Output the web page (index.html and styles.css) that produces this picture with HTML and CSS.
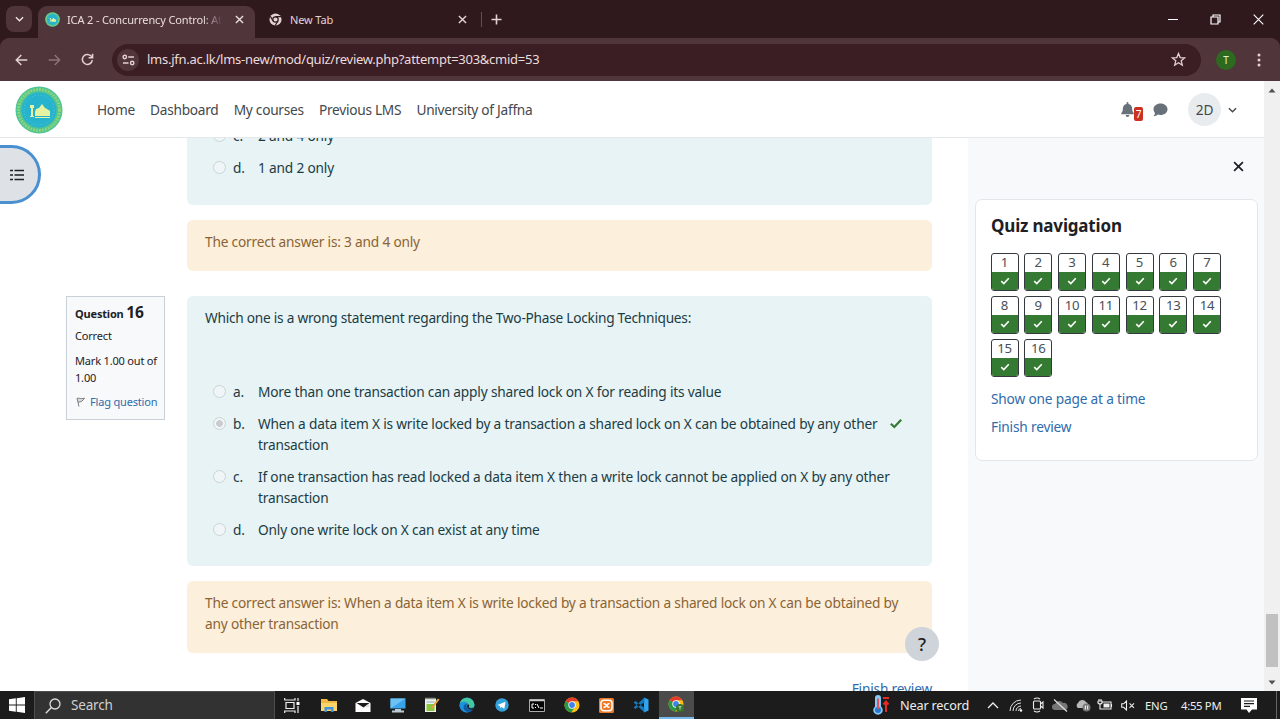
FILE: index.html
```html
<!DOCTYPE html>
<html lang="en">
<head>
<meta charset="utf-8">
<title>ICA 2 - Concurrency Control</title>
<link rel="stylesheet" href="styles.css">
</head>
<body>
<svg class="defs" width="0" height="0">
  <symbol id="check" viewBox="0 0 12 10"><path d="M1.3 5.2 4.5 8.2 10.7 1.6" fill="none" stroke="currentColor" stroke-width="2"/></symbol>
  <symbol id="close" viewBox="0 0 10 10"><path d="M1 1 9 9M9 1 1 9" fill="none" stroke="currentColor" stroke-width="1.6"/></symbol>
  <symbol id="down" viewBox="0 0 10 6"><path d="M1 1 5 5 9 1" fill="none" stroke="currentColor" stroke-width="1.5"/></symbol>
  <symbol id="logo" viewBox="0 0 48 48">
    <circle cx="24" cy="24" r="23.5" fill="#4fc494"/><circle cx="24" cy="24" r="20.5" fill="none" stroke="#8ad47a" stroke-width="3" stroke-dasharray="2 1"/>
    <circle cx="24" cy="24" r="17.5" fill="#27b3cd"/><circle cx="24" cy="24" r="15" fill="none" stroke="#55cbd0" stroke-width="1" stroke-dasharray="1 2"/>
    <path d="M20 30h15v-5l-3-2-2-1-3-4-3 4-3 1-1 3zM15 31h4v-1h-1v-8h1v-3h-4v3h1v8h-1v1zM20 31h15v1H20z" fill="#e6f3a0"/>
  </symbol>
  <symbol id="chrome" viewBox="0 0 16 16">
    <circle cx="8" cy="8" r="7.5" fill="#fbc116"/><path d="M8 8 1.5 4.25A7.5 7.5 0 0 1 14.5 4.3H8z" fill="#e33b2e"/><path d="M1.5 4.25A7.5 7.5 0 0 0 7.3 15.5L11 9.6 8 8z" fill="#279847"/>
    <circle cx="8" cy="8" r="3.7" fill="#fff"/><circle cx="8" cy="8" r="2.9" fill="#3f82ee"/>
  </symbol>
</svg>
<header class="browser">
  <div class="tabs">
    <button class="tab-menu"><svg width="9" height="6"><use href="#down"/></svg></button>
    <div class="tab tab-active">
      <svg width="15" height="15"><use href="#logo"/></svg>
      <span class="tab-title">ICA 2 - Concurrency Control: Attempt</span>
      <svg class="tab-x" width="9" height="9"><use href="#close"/></svg>
    </div>
    <div class="tab tab-idle">
      <svg width="13" height="13" viewBox="0 0 14 14"><circle cx="7" cy="7" r="6.5" fill="#e3d2d4"/><circle cx="7" cy="7" r="2.9" fill="#e3d2d4" stroke="#30191d" stroke-width="1.3"/><path d="M7 3.9h6M4.3 8.4 1.4 3.6M9.7 8.6 6.6 13.5" stroke="#30191d" stroke-width="1.3"/></svg>
      <span class="tab-name">New Tab</span>
      <svg class="tab-x" width="9" height="9"><use href="#close"/></svg>
    </div>
    <span class="tab-sep"></span>
    <svg class="plus" width="11" height="11" viewBox="0 0 11 11"><path d="M5.5.5v10M.5 5.5h10" stroke="#e3d2d4" stroke-width="1.6"/></svg>
    <div class="window-buttons">
      <svg width="10" height="11" viewBox="0 0 10 11"><path d="M0 5.5h10" stroke="#fff"/></svg>
      <svg width="11" height="11" viewBox="0 0 11 11"><path d="M1 3h7v7H1zM3 3V1h7v7H8" fill="none" stroke="#fff" stroke-width="1.2"/></svg>
      <svg width="11" height="11" viewBox="0 0 11 11"><path d="M.7.7l9.6 9.6M10.3.7.7 10.3" stroke="#fff" stroke-width="1.1"/></svg>
    </div>
  </div>
  <div class="toolbar">
    <svg class="tool" width="13" height="12" viewBox="0 0 13 12"><path d="M12.3 6H1.5M6.3 1 1.3 6l5 5" fill="none" stroke="#e3d2d4" stroke-width="1.5"/></svg>
    <svg class="tool" width="13" height="12" viewBox="0 0 13 12"><path d="M.7 6h10.8M6.7 1l5 5-5 5" fill="none" stroke="#8d7377" stroke-width="1.4"/></svg>
    <svg class="tool" width="13" height="13" viewBox="0 0 13 13"><path d="M11.3 7.2A5 5 0 1 1 9.8 2.8L11.3 4.3M11.6.8v4H7.6" fill="none" stroke="#e3d2d4" stroke-width="1.5"/></svg>
    <div class="address">
      <span class="site-info"><svg width="13" height="12" viewBox="0 0 13 12"><g fill="none" stroke="#e3d2d4" stroke-width="1.4"><path d="M6.2 3H12M1 9h5.5"/><circle cx="2.8" cy="3" r="1.7"/><circle cx="10.2" cy="9" r="1.7"/></g></svg></span>
      <span class="url">lms.jfn.ac.lk/lms-new/mod/quiz/review.php?attempt=303&amp;cmid=53</span>
      <svg class="star" width="15" height="15" viewBox="0 0 15 15"><path d="M7.5 1.5 9.2 5.6l4.4.3-3.4 2.9 1.1 4.4-3.8-2.4-3.8 2.4 1.1-4.4L1.4 5.9l4.4-.3z" fill="none" stroke="#e3d2d4" stroke-width="1.3"/></svg>
    </div>
    <span class="profile">T</span>
    <svg class="dots" width="4" height="14" viewBox="0 0 4 14"><g fill="#e3d2d4"><circle cx="2" cy="2" r="1.5"/><circle cx="2" cy="7" r="1.5"/><circle cx="2" cy="12" r="1.5"/></g></svg>
  </div>
</header>
<div class="viewport">
  <div class="page">
    <nav class="navbar">
      <svg class="logo" width="48" height="48"><use href="#logo"/></svg>
      <a>Home</a><a>Dashboard</a><a>My courses</a><a>Previous LMS</a><a>University of Jaffna</a>
      <div class="bell"><svg width="13" height="15" viewBox="0 0 14 16"><path d="M7 0a1 1 0 0 1 1 1v1c2.500.5 4 2.300 4 5 0 3 .8 3.800 1.700 5v1H.3v-1C1.200 10.800 2 10 2 7c0-2.700 1.500-4.500 4-5V1a1 1 0 0 1 1-1zM5 14h4a2 2 0 0 1-4 0z" fill="#68717a"/></svg><span class="count">7</span></div>
      <svg class="chat" width="15" height="14" viewBox="0 0 15 14"><path d="M7.500.5c4 0 7 2.500 7 5.800s-3 5.800-7 5.800c-1 0-2-.2-2.800-.5-1 .9-2.400 1.600-4.200 1.600.8-.9 1.400-2 1.500-3A5.300 5.300 0 0 1 .5 6.300C.5 3 3.500.5 7.500.5z" fill="#68717a"/></svg>
      <span class="user">2D</span>
      <svg class="user-down" width="9" height="6"><use href="#down"/></svg>
    </nav>
    <div class="columns">
      <button class="index-toggle"><svg width="14" height="12" viewBox="0 0 14 12"><path d="M0 1.500h3M0 6h3M0 10.500h3M4.500 1.500H14M4.500 6H14M4.500 10.500H14" stroke="#1d2125" stroke-width="1.700"/></svg></button>
      <main class="content">
        <section class="question question-first">
          <div class="info-space"></div>
          <div class="body">
            <div class="formulation partial">
              <div class="answer"><i class="radio"></i><b>c.</b><p>2 and 4 only</p></div>
              <div class="answer"><i class="radio"></i><b>d.</b><p>1 and 2 only</p></div>
            </div>
            <div class="outcome">The correct answer is: 3 and 4 only</div>
          </div>
        </section>
        <section class="question">
          <aside class="info">
            <h3>Question <strong>16</strong></h3>
            <p class="state">Correct</p>
            <p class="grade">Mark 1.00 out of<br>1.00</p>
            <p class="flag"><svg width="9" height="10" viewBox="0 0 9 10"><path d="M1 1.200 3 9.500M1 1.500c2-1 3 .8 7.500-.3C7 3.500 5 5.500 2.200 5" fill="#d8dadc" stroke="#777c81" stroke-width="1"/></svg><a>Flag question</a></p>
          </aside>
          <div class="body">
            <div class="formulation">
              <p class="qtext">Which one is a wrong statement regarding the Two-Phase Locking Techniques:</p>
              <div class="answer"><i class="radio"></i><b>a.</b><p>More than one transaction can apply shared lock on X for reading its value</p></div>
              <div class="answer"><i class="radio radio-on"></i><b>b.</b><p>When a data item X is write locked by a transaction a shared lock on X can be obtained by any other<br>transaction</p><svg class="correct" width="14" height="11"><use href="#check"/></svg></div>
              <div class="answer"><i class="radio"></i><b>c.</b><p>If one transaction has read locked a data item X then a write lock cannot be applied on X by any other<br>transaction</p></div>
              <div class="answer"><i class="radio"></i><b>d.</b><p>Only one write lock on X can exist at any time</p></div>
            </div>
            <div class="outcome">The correct answer is: When a data item X is write locked by a transaction a shared lock on X can be obtained by<br>any other transaction</div>
          </div>
        </section>
        <a class="finish">Finish review</a>
        <button class="help">?</button>
      </main>
      <aside class="drawer">
        <svg class="drawer-close" width="11" height="11"><use href="#close"/></svg>
        <section class="card">
          <h2>Quiz navigation</h2>
          <div class="quiz-grid">
            <a class="q">1<span><svg width="10" height="8"><use href="#check"/></svg></span></a><a class="q">2<span><svg width="10" height="8"><use href="#check"/></svg></span></a><a class="q">3<span><svg width="10" height="8"><use href="#check"/></svg></span></a><a class="q">4<span><svg width="10" height="8"><use href="#check"/></svg></span></a><a class="q">5<span><svg width="10" height="8"><use href="#check"/></svg></span></a><a class="q">6<span><svg width="10" height="8"><use href="#check"/></svg></span></a><a class="q">7<span><svg width="10" height="8"><use href="#check"/></svg></span></a>
            <a class="q">8<span><svg width="10" height="8"><use href="#check"/></svg></span></a><a class="q">9<span><svg width="10" height="8"><use href="#check"/></svg></span></a><a class="q">10<span><svg width="10" height="8"><use href="#check"/></svg></span></a><a class="q">11<span><svg width="10" height="8"><use href="#check"/></svg></span></a><a class="q">12<span><svg width="10" height="8"><use href="#check"/></svg></span></a><a class="q">13<span><svg width="10" height="8"><use href="#check"/></svg></span></a><a class="q">14<span><svg width="10" height="8"><use href="#check"/></svg></span></a>
            <a class="q">15<span><svg width="10" height="8"><use href="#check"/></svg></span></a><a class="q">16<span><svg width="10" height="8"><use href="#check"/></svg></span></a>
          </div>
          <a class="card-link">Show one page at a time</a>
          <a class="card-link">Finish review</a>
        </section>
      </aside>
    </div>
  </div>
  <div class="scrollbar">
    <svg width="8" height="5" viewBox="0 0 8 5"><path d="M4 .5 7.500 4.500h-7z" fill="#505050"/></svg>
    <span class="thumb"></span>
    <svg width="8" height="5" viewBox="0 0 8 5"><path d="M4 4.500 7.500.5h-7z" fill="#505050"/></svg>
  </div>
</div>
<footer class="taskbar">
  <span class="start"><svg width="16" height="16" viewBox="0 0 16 16"><path d="M0 2.300 6.800 1.300v6.200H0zM7.700 1.200 16 0v7.500H7.700zM0 8.400h6.800v6.300L0 13.700zM7.700 8.400H16V16l-8.300-1.200z" fill="#fff"/></svg></span>
  <div class="search"><svg width="16" height="16" viewBox="0 0 16 16"><circle cx="10" cy="6" r="5" fill="none" stroke="#dcdcdc" stroke-width="1.300"/><path d="M6.400 9.600.8 15.200" stroke="#dcdcdc" stroke-width="1.400"/></svg><span>Search</span></div>
  <div class="apps">
    <span><svg width="16" height="15" viewBox="0 0 16 15"><path d="M2 4.500h8v6H2zM.7 0v2H11V0M.7 15v-2H11v2M14 0v3M14 8v7" fill="none" stroke="#eee" stroke-width="1.200"/><path d="M12.500 4h3v3h-3z" fill="#fff"/></svg></span>
    <span class="app-folder"><svg width="16" height="14" viewBox="0 0 16 14"><path d="M0 1h6l1.500 2H16v10H0z" fill="#f3b83f"/><path d="M0 5h16v8H0z" fill="#fbd56b"/><path d="M3.500 14V9h9v5h-2.300v-2.500H5.800V14z" fill="#3f93dc"/></svg></span>
    <span class="app-mail"><svg width="16" height="13" viewBox="0 0 16 13"><path d="M.5 4 8 0l7.500 4v9H.5z" fill="#fff"/><path d="M1.500 4h13L8.500 8.500z" fill="#1c1c1c"/><path d="M8.500 8.500 14 5v3z" fill="#ddd"/></svg></span>
    <span class="app-mail"><svg width="16" height="15" viewBox="0 0 16 15"><path d="M.5.500h15v10H.5z" fill="#3aa4e8"/><path d="M.5 10.500 15.500.500H.5z" fill="#6cc2f2"/><path d="M5 11h6v1.500h3v2H2v-2h3z" fill="#b9cbd6"/></svg></span>
    <span><svg width="16" height="16" viewBox="0 0 16 16"><path d="M1 1.500h11V15H1z" fill="#eef2e7"/><path d="M1.500 1.500h10" stroke="#8a9382" stroke-width="2" stroke-dasharray="1 1"/><path d="M2.500 7h8v7h-8z" fill="#8bc53f"/><path d="M2.500 5h8" stroke="#78b2cf"/><path d="M14.700 2 8 11" stroke="#e9a13b" stroke-width="2"/></svg></span>
    <span><svg width="16" height="16" viewBox="0 0 16 16"><circle cx="8" cy="8" r="7.500" fill="#167fc9"/><path d="M.6 7A7.500 7.500 0 0 1 15.500 8c0 3-5 3.500-6.500 2 1.500-2-.5-5-3.500-5-2.500 0-4.300 1.200-4.900 2z" fill="#42c9a0"/><path d="M.5 8c.5-4 6.500-4 8-1.500-4 0-4.500 5.500 0 8.900C3 15.500.5 11.500.5 8z" fill="#1d92dd"/><path d="M8.500 6.800C5 9 8 14 14 12.300c-2 3.500-7 3.500-9 0-1.200-2.800.5-5.700 3.500-5.500z" fill="#14599e"/><path d="M9 7.500c2 0 1 2.500.5 3 2 1.500 5 1 6.500 0v1.500c-3 1.500-8 .5-8-2.500 0-1 .5-1.500 1-2z" fill="#1c1c1c"/></svg></span>
    <span><svg width="14" height="14" viewBox="0 0 14 14"><circle cx="7" cy="7" r="6.700" fill="#31a3dc"/><path d="m2.500 7 8-3.300L9.300 11 6.600 9 5.300 10.200 5 8z" fill="#fff"/></svg></span>
    <span><svg width="16" height="13" viewBox="0 0 16 13"><path d="M.5.500h15v12H.5z" fill="#050505" stroke="#aaa"/><path d="M1 1.500h14" stroke="#ccc" stroke-width="1.500"/><path d="M5 5H3v4h2M6.500 5v1M6.500 8v1M8 5l2 4M11 9h3" fill="none" stroke="#fff" stroke-width="1"/></svg></span>
    <span><svg width="16" height="16"><use href="#chrome"/></svg></span>
    <span><svg width="15" height="15" viewBox="0 0 15 15"><rect width="15" height="15" rx="1.500" fill="#ec7a2b"/><g fill="none" stroke="#fff" stroke-width="1.500"><rect x="2" y="2.300" width="11" height="10.400" rx="3"/><path d="M4.500 5.500c3 0 3 4 6 4M10.500 5.500c-3 0-3 4-6 4"/></g></svg></span>
    <span><svg width="16" height="16" viewBox="0 0 16 16"><path d="M11 .5 15.500 2.500v11L11 15.500z" fill="#31a5ee"/><path d="M11.500.5v4.500L2.500 12 .7 10.500zM11.500 15.500V11L2.500 4 .7 5.500z" fill="#167abf"/></svg></span>
    <span class="app-active"><svg width="16" height="16" viewBox="0 0 16 16"><use href="#chrome"/><circle cx="12" cy="12" r="4" fill="#36752b"/><path d="M10.500 10.700h3M12 10.700v3" stroke="#d8edd3" stroke-width=".8"/></svg></span>
  </div>
  <div class="weather"><svg width="18" height="20" viewBox="0 0 18 20"><path d="M3 3a3 3 0 0 1 6 0v8.500a4.700 4.700 0 1 1-6 0z" fill="#8ac9f5"/><circle cx="6" cy="15" r="3" fill="#2877c9"/><path d="M6 3.500V14" stroke="#e05260" stroke-width="2"/><path d="M11 3h6M14 17V7M11.500 9.500 14 6.500l2.500 3" fill="none" stroke="#e52a25" stroke-width="2"/></svg><span>Near record</span></div>
  <div class="tray">
    <span><svg width="12" height="7" viewBox="0 0 12 7"><path d="M1 6 6 1l5 5" fill="none" stroke="#eee" stroke-width="1.300"/></svg></span>
    <span><svg width="14" height="13" viewBox="0 0 14 13"><g fill="none" stroke="#ddd"><path d="M1 12A11 11 0 0 1 12 1M4 12a8 8 0 0 1 8-8M7 12a5 5 0 0 1 5-5M9.500 12A2.500 2.500 0 0 1 12 9.500"/></g><circle cx="12" cy="11.500" r="1.200" fill="#fff"/></svg></span>
    <span><svg width="12" height="16" viewBox="0 0 12 16"><g fill="none" stroke="#eee" stroke-width="1.100"><rect x="1.500" y="4" width="7" height="8" rx="1"/><path d="M8.500 7 11 5v6L8.500 9M2 2q3-2 6 0M2 14q3 2 6 0"/></g></svg></span>
    <span><svg width="16" height="13" viewBox="0 0 16 13"><path d="M3 11a3 3 0 0 1 0-6 4.500 4.500 0 0 1 8-1 3.600 3.600 0 0 1 2 7z" fill="#777"/><path d="M2 .5 15 12.500" stroke="#ddd" stroke-width="1.300"/></svg></span>
    <span><svg width="16" height="13" viewBox="0 0 16 13"><path d="M3 9a3 3 0 0 1 0-5A4.500 4.500 0 0 1 11 3a3.600 3.600 0 0 1 1 6z" fill="#b9b9b9"/><circle cx="11.500" cy="8.500" r="4" fill="#777"/><path d="M10.300 6.500v4M12.700 6.500v4" stroke="#fff"/></svg></span>
    <span><svg width="16" height="12" viewBox="0 0 16 12"><path d="M5 3h9v7H5M14.500 5v3M1 2v2q2 2 4 0V2H1M2 0v2M4 0v2M3 5v5h3" fill="none" stroke="#eee" stroke-width="1.100"/><path d="M6.500 4.500h6v4h-6z" fill="#eee"/></svg></span>
    <span><svg width="14" height="11" viewBox="0 0 14 11"><path d="M.7 3.800h2L5.500 1v9L2.700 7.300h-2zM8.500 3.300l4.500 4.500M13 3.300 8.500 7.800" fill="none" stroke="#eee" stroke-width="1.100"/></svg></span>
  </div>
  <span class="lang">ENG</span><span class="clock">4:55 PM</span>
  <svg class="note" width="16" height="15" viewBox="0 0 16 15"><path d="M0 0h16v11.500h-5L8 15l-2.500-3.500H0z" fill="#fff"/><path d="M3 3h10M3 5.700h10M3 8.400h6" stroke="#1c1c1c" stroke-width="1.200"/></svg>
  <span class="desktop"></span>
</footer>
</body>
</html>
```

FILE: styles.css
```css
* { box-sizing: border-box; }
body { margin: 0; width: 1280px; height: 719px; overflow: hidden; display: flex; flex-direction: column; font: 13.7px/21px "Noto Sans", "Open Sans", sans-serif; letter-spacing: -.18px; color: #1d2125; background: #fff; }
button { padding: 0; border: 0; font: inherit; }
h2, h3, p { margin: 0; }
svg { display: block; flex: none; }
.defs { position: absolute; }
.browser { flex: none; height: 81px; background: #30191d; color: #eadcdd; }
.tabs { height: 38px; display: flex; align-items: center; padding-left: 6px; }
.tab-menu { width: 26px; height: 26px; border-radius: 8px; background: #4f343a; color: #f0e4e5; display: grid; place-items: center; }
.tab { display: flex; align-items: center; font-size: 11px; letter-spacing: -.14px; }
.tab-active { align-self: flex-end; width: 217px; height: 32px; margin-left: 6px; padding: 0 11px 6px 7px; border-radius: 9px 9px 0 0; background: #50353b; }
.tab-title { width: 157px; margin-left: 7px; overflow: hidden; white-space: nowrap; mask-image: linear-gradient(90deg, #000 87%, transparent 99%); }
.tab-x { margin-left: auto; }
.tab-idle { width: 212px; padding-left: 14px; color: #e3d2d4; }
.tab-name { margin-left: 8px; }
.tab-sep { width: 1px; height: 15px; margin-left: 14px; background: #694b51; }
.plus { margin-left: 9px; }
.window-buttons { margin-left: auto; display: flex; gap: 32px; padding-right: 16px; }
.toolbar { height: 43px; display: flex; align-items: center; padding: 0 19px 0 15px; background: #50353b; border-radius: 9px 9px 0 0; }
.tool { margin-right: 20px; }
.address { width: 1089px; height: 32px; margin-left: -2px; padding: 0 15px 0 5px; border-radius: 16px; background: #3a1e23; display: flex; align-items: center; font-size: 13px; letter-spacing: -.26px; }
.site-info { width: 22px; height: 22px; border-radius: 50%; background: #50353b; display: grid; place-items: center; }
.url { margin-left: 8px; }
.star { margin-left: auto; }
.profile { width: 20px; height: 20px; margin-left: 15px; border-radius: 50%; background: #2d6a1f; color: #dcefd8; font-size: 10px; line-height: 20px; text-align: center; }
.dots { margin-left: auto; }
.viewport { flex: 1; min-height: 0; display: flex; }
.page { width: 1264px; display: flex; flex-direction: column; }
.navbar { flex: none; height: 57px; display: flex; align-items: center; padding: 1px 0 0 15px; border-bottom: 1px solid #e4e8eb; color: #43484d; }
.logo { margin-right: 34px; }
.navbar a { margin-right: 15.2px; white-space: nowrap; letter-spacing: -.27px; }
.bell { display: flex; margin-left: auto; }
.count { align-self: flex-end; width: 9px; height: 14px; margin: 4px 0 -4px; border-radius: 2px; background: #ca3120; color: #fff; font-size: 10px; line-height: 14px; text-align: center; }
.chat { margin-left: 10px; }
.user { width: 33px; height: 33px; margin-left: 20px; border-radius: 50%; background: #e9ecef; line-height: 33px; text-align: center; }
.user-down { margin: 0 27px 0 7px; color: #43484d; }
.columns { position: relative; flex: 1; min-height: 0; display: flex; overflow: hidden; }
.index-toggle { position: absolute; left: -4px; top: 7px; width: 45px; height: 59px; border: 3px solid #4a90d0; border-radius: 0 30px 30px 0; background: #dee2e6; display: flex; align-items: center; padding-left: 11px; }
.content { position: relative; width: 968px; padding: 0 36px 0 66px; }
.question { display: grid; grid-template-columns: 99px 745px; column-gap: 22px; align-items: start; }
.question-first { margin-bottom: 25px; }
.formulation { display: flow-root; height: 270px; padding: 11px 18px; border-radius: 6px; background: #e7f3f5; color: #1c3c44; }
.partial { height: 67px; padding-top: 0; border-radius: 0 0 6px 6px; }
.partial .answer:first-child { margin-top: -13px; }
.qtext { margin-bottom: 53px; white-space: nowrap; letter-spacing: -.25px; }
.answer { display: flex; margin-bottom: 11px; padding-left: 8px; white-space: nowrap; }
.answer b { width: 25px; margin-left: 7px; font-weight: 400; }
.radio { width: 13px; height: 13px; margin-top: 4px; border: 1px solid #ccd3d6; border-radius: 50%; background: #f0f6f8; }
.radio-on { background: radial-gradient(circle, #c8cccf 0 3px, #f0f6f8 3.700px); }
.correct { margin: 5px 0 0 12px; color: #357a32; }
.outcome { margin-top: 15px; padding: 11px 18px 19px; border-radius: 6px; background: #fcefdc; color: #8a6434; white-space: nowrap; letter-spacing: -.2px; }
.info { height: 124px; padding: 6px 7px 6px 8px; border: 1px solid #cad0d7; background: #f8f9fa; font-size: 11px; line-height: 17px; white-space: nowrap; }
.info h3 { font-size: 11px; line-height: 19px; }
.info strong { font-size: 15.500px; font-weight: 700; }
.state { margin-top: 4px; }
.grade { margin-top: 8px; }
.flag { display: flex; align-items: center; gap: 5px; margin-top: 7px; padding-left: 1px; }
.flag a, .finish, .card-link { color: #2f6cac; }
.finish { display: block; margin-top: 25px; text-align: right; }
.help { position: absolute; left: 905px; top: 489px; width: 34px; height: 34px; border-radius: 50%; background: #ced4da; color: #1d2125; font-size: 18px; font-weight: 500; }
.drawer { width: 296px; padding: 23px 6px 0 7px; background: #f8f9fb; }
.drawer-close { margin: 0 14px 0 auto; }
.card { height: 262px; margin-top: 27px; padding: 14px 15px; border: 1px solid #e3e6ea; border-radius: 7px; background: #fff; }
.card h2 { font-size: 17px; line-height: 24px; margin-bottom: 15px; }
.quiz-grid { display: grid; grid-template-columns: repeat(7, 28px); gap: 5px 5.750px; margin: 0 0 11px -.5px; }
.q { height: 38px; border: 1px solid #343a40; border-radius: 3px; overflow: hidden; font-size: 13.200px; line-height: 17px; text-align: center; color: #495057; }
.q span { height: 18px; margin-top: 1px; display: grid; place-items: center; background: #357a32; color: #fff; }
.card-link { display: block; margin-bottom: 7px; }
.scrollbar { width: 16px; height: 610px; background: #f0f0f0; display: flex; flex-direction: column; align-items: center; padding: 7px 0 6px; }
.thumb { width: 12px; height: 53px; margin: auto 0 13px; background: #c1c1c1; }
.taskbar { flex: none; height: 28px; display: flex; align-items: center; background: #1c1c1c; color: #eee; font-size: 12.700px; white-space: nowrap; }
.start { width: 34px; display: grid; place-items: center; }
.search { width: 241px; height: 28px; border: 1px solid #4e4e4e; border-bottom: 0; background: #323232; display: flex; align-items: center; padding-left: 10px; gap: 10px; color: #d0d0d0; font-size: 13.500px; }
.apps { display: flex; height: 28px; }
.apps span { width: 34.900px; display: grid; place-items: center; }
.apps .app-folder { padding-left: 4px; }
.apps .app-mail { padding-left: 2px; }
.app-active { background: #4b4b4b; border-bottom: 2px solid #76b9ed; }
.weather { width: 110px; margin-left: auto; display: flex; align-items: center; gap: 10px; }
.tray { width: 163px; display: flex; }
.tray span { width: 22.400px; display: grid; place-items: center; }
.lang { width: 36px; font-size: 11.300px; }
.clock { width: 60px; font-size: 11.300px; letter-spacing: -.3px; }
.note { margin-right: 19px; }
.desktop { width: 4px; height: 28px; border-left: 1px solid #666; }
```
